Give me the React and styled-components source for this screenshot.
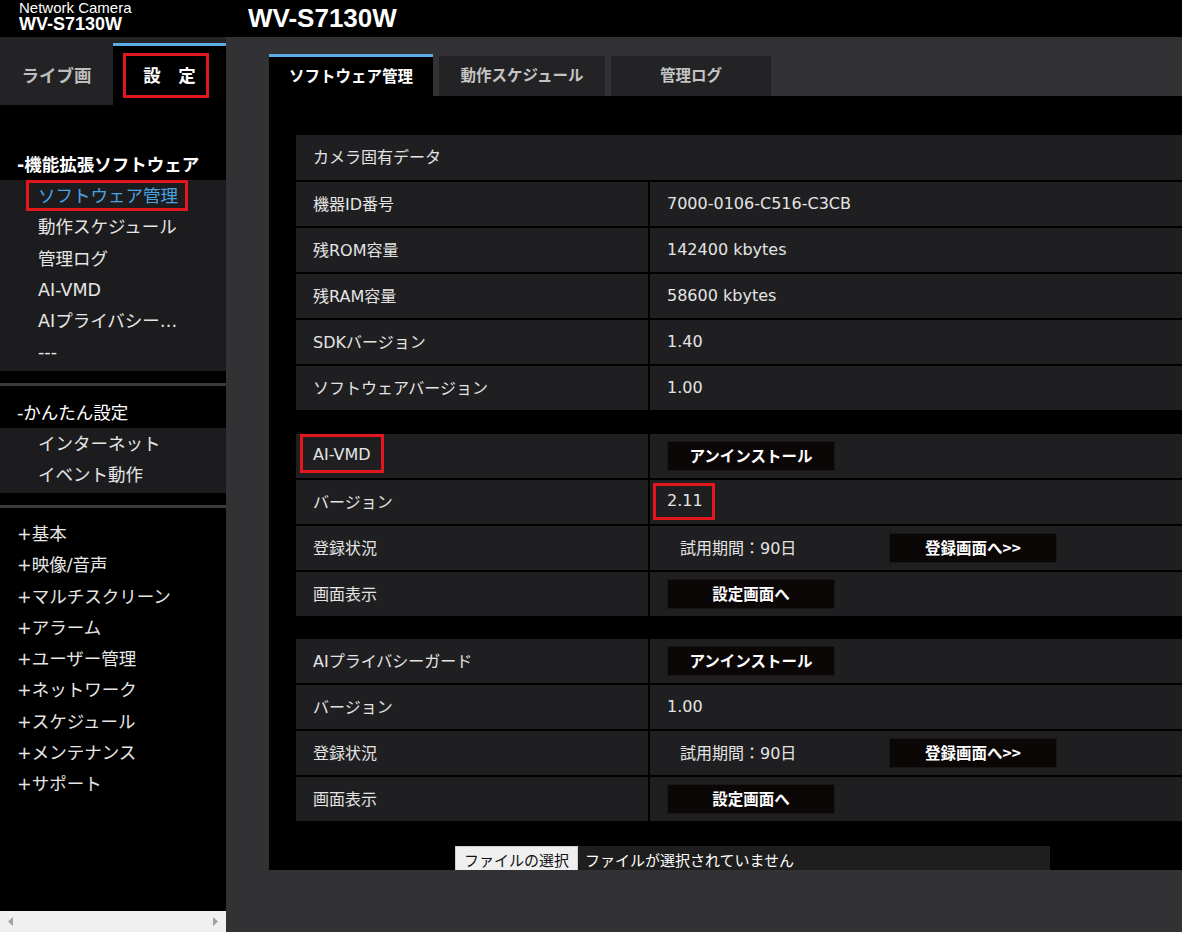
import React from 'react';
import styled, { createGlobalStyle } from 'styled-components';

const GlobalStyle = createGlobalStyle`
  html, body {
    margin: 0;
    padding: 0;
    background: #000;
    overflow: hidden;
  }
  body {
    font-family: "DejaVu Sans", "Noto Sans CJK JP", sans-serif;
    color: #e6e6e6;
  }
`;

const Page = styled.div`
  display: grid;
  grid-template-columns: 226px 1fr;
  grid-template-rows: 37px 895px;
  width: 1182px;
  height: 932px;
`;

const TopBar = styled.header`
  grid-column: 1 / -1;
  display: flex;
  background: #000;
  color: #fff;
  font-family: "Liberation Sans", Arial, sans-serif;
`;

const Brand = styled.div`
  width: 248px;
  padding: 1px 0 0 19px;
  box-sizing: border-box;
`;

const BrandSmall = styled.div`
  font-size: 15px;
  line-height: 14px;
`;

const BrandModel = styled.div`
  font-size: 18px;
  font-weight: bold;
  line-height: 19px;
`;

const Title = styled.h1`
  margin: 0;
  font-size: 26px;
  font-weight: bold;
  line-height: 37px;
`;

/* annotation frame drawn over a piece of text */
const Mark = styled.span`
  position: relative;
  display: inline-block;
  line-height: ${(p) => p.$lh || 'inherit'};

  &::after {
    content: '';
    position: absolute;
    inset: ${(p) => p.$inset};
    border: 3px solid #e3161d;
    pointer-events: none;
  }
`;

const Sidebar = styled.nav`
  display: flex;
  flex-direction: column;
  background: #000;
  overflow: hidden;
  font-size: 17.5px;
`;

const SideTabs = styled.div`
  display: flex;
  height: 68px;
  background: #232325;
`;

const SideTab = styled.div`
  width: 113px;
  box-sizing: border-box;
  display: flex;
  align-items: center;
  justify-content: center;
  font-weight: bold;
  color: ${(p) => (p.$active ? '#fff' : '#bdbdbd')};
  background: ${(p) => (p.$active ? '#000' : 'transparent')};
  margin-top: ${(p) => (p.$active ? '6px' : '0')};
  padding-top: ${(p) => (p.$active ? '0' : '6px')};
  border-top: ${(p) => (p.$active ? '3px solid #5aaee5' : 'none')};
`;

const MenuHeading = styled.div`
  padding: ${(p) => p.$pad} 0 0 17px;
  line-height: 30px;
  color: #fff;
  font-weight: ${(p) => (p.$bold ? 'bold' : 'normal')};
`;

const SubMenu = styled.div`
  background: #1c1c1e;
  padding-bottom: 3px;
`;

const MenuItem = styled.div`
  padding-left: ${(p) => p.$indent || '38px'};
  padding-top: 2px;
  line-height: 29.25px;
  height: 31.25px;
  box-sizing: border-box;
  color: ${(p) => (p.$current ? '#4aa2e0' : '#e6e6e6')};
  white-space: nowrap;
`;

const Separator = styled.div`
  margin-top: 12px;
  height: 3px;
  background: #3a3a3c;
`;

const PlusList = styled.div`
  padding-top: 10px;
`;

const ScrollBar = styled.div`
  margin-top: auto;
  height: 21px;
  background: #f0f0f0;
  display: flex;
  align-items: center;
  justify-content: space-between;
  padding: 0 8px;
`;

const Main = styled.main`
  background: #323234;
  padding: 17px 0 0 43px;
  overflow: hidden;
`;

const Tabs = styled.div`
  display: flex;
  align-items: flex-end;
  gap: 6px;
  height: 42px;
`;

const Tab = styled.div`
  width: ${(p) => p.$w}px;
  height: ${(p) => (p.$active ? '42px' : '40px')};
  box-sizing: border-box;
  display: flex;
  align-items: center;
  justify-content: center;
  padding-bottom: 4px;
  font-size: 15.5px;
  font-weight: bold;
  color: ${(p) => (p.$active ? '#fff' : '#c4c4c4')};
  background: ${(p) => (p.$active ? '#000' : '#232325')};
  border-top: ${(p) => (p.$active ? '3px solid #5aaee5' : 'none')};
`;

const Panel = styled.div`
  width: 1000px;
  height: 774px;
  box-sizing: border-box;
  padding: 39px 0 0 27px;
  background: #000;
  overflow: hidden;
`;

const Section = styled.div`
  display: grid;
  grid-template-columns: 352px 1fr;
  gap: 2px;
  width: 960px;
  margin-bottom: ${(p) => p.$gap || '24px'};
`;

const Cell = styled.div`
  display: flex;
  align-items: center;
  box-sizing: border-box;
  min-height: ${(p) => (p.$head ? '45px' : '44px')};
  padding: 0 0 ${(p) => (p.$head ? '4px' : '2px')} 17px;
  background: #1f1f21;
  font-size: 16px;
  color: #e4e4e4;
  grid-column: ${(p) => (p.$head ? '1 / -1' : 'auto')};
`;

const ButtonCell = styled(Cell)`
  padding-bottom: 0;
`;

const Button = styled.button`
  width: 168px;
  height: 30px;
  padding: 0 0 2px;
  background: #0c0707;
  border: 1px solid #1b1616;
  color: #fff;
  font-family: "Noto Sans CJK JP", sans-serif;
  font-size: 15.5px;
  font-weight: bold;
  cursor: pointer;
`;

const Trial = styled.span`
  width: 222px;
  box-sizing: border-box;
  padding: 0 0 2px 13px;
`;

const FileRow = styled.div`
  display: flex;
  margin-left: 159px;
  width: 595px;
  height: 40px;
  background: #1e1e1e;
  font-family: "Noto Sans CJK JP", sans-serif;
  font-size: 15px;
`;

const FileButton = styled.button`
  width: 123px;
  height: 28px;
  padding: 0;
  background: #efefef;
  border: 1px solid #cfcfcf;
  color: #111;
  font-family: inherit;
  font-size: 15px;
  line-height: 26px;
`;

const FileName = styled.span`
  margin-left: 7px;
  line-height: 28px;
  color: #fff;
`;

const Arrow = ({ dir }) => (
  <svg width="6" height="9" viewBox="0 0 6 9">
    <path d={dir === 'left' ? 'M5 0 L0 4.5 L5 9 Z' : 'M1 0 L6 4.5 L1 9 Z'} fill="#a3a3a3" />
  </svg>
);

const subItems = ['動作スケジュール', '管理ログ', 'AI-VMD', 'AIプライバシー…', '---'];
const plusItems = ['+基本', '+映像/音声', '+マルチスクリーン', '+アラーム', '+ユーザー管理', '+ネットワーク', '+スケジュール', '+メンテナンス', '+サポート'];

const cameraRows = [
  ['機器ID番号', '7000-0106-C516-C3CB'],
  ['残ROM容量', '142400 kbytes'],
  ['残RAM容量', '58600 kbytes'],
  ['SDKバージョン', '1.40'],
  ['ソフトウェアバージョン', '1.00'],
];

function ExtensionBlock({ name, version, highlight, gap }) {
  return (
    <Section $gap={gap}>
      <Cell>
        {highlight ? <Mark $lh="22px" $inset="-10px -13px -7px -13px">{name}</Mark> : name}
      </Cell>
      <ButtonCell><Button>アンインストール</Button></ButtonCell>
      <Cell>バージョン</Cell>
      <Cell>
        {highlight ? <Mark $lh="22px" $inset="-7px -12px -8px -14px">{version}</Mark> : version}
      </Cell>
      <Cell>登録状況</Cell>
      <ButtonCell>
        <Trial>試用期間：90日</Trial>
        <Button>登録画面へ&gt;&gt;</Button>
      </ButtonCell>
      <Cell>画面表示</Cell>
      <ButtonCell><Button>設定画面へ</Button></ButtonCell>
    </Section>
  );
}

export default function App() {
  return (
    <>
      <GlobalStyle />
      <Page>
        <TopBar>
          <Brand>
            <BrandSmall>Network Camera</BrandSmall>
            <BrandModel>WV-S7130W</BrandModel>
          </Brand>
          <Title>WV-S7130W</Title>
        </TopBar>

        <Sidebar>
          <SideTabs>
            <SideTab>ライブ画</SideTab>
            <SideTab $active>
              <Mark $lh="24px" $inset="-11px -13px -10px -20px">設　定</Mark>
            </SideTab>
          </SideTabs>

          <MenuHeading $pad="45px" $bold>-機能拡張ソフトウェア</MenuHeading>
          <SubMenu>
            <MenuItem $current>
              <Mark $lh="29.25px" $inset="-2px -10px 0 -12px">ソフトウェア管理</Mark>
            </MenuItem>
            {subItems.map((item) => (
              <MenuItem key={item}>{item}</MenuItem>
            ))}
          </SubMenu>
          <Separator />

          <MenuHeading $pad="12px">-かんたん設定</MenuHeading>
          <SubMenu>
            <MenuItem>インターネット</MenuItem>
            <MenuItem>イベント動作</MenuItem>
          </SubMenu>
          <Separator />

          <PlusList>
            {plusItems.map((item) => (
              <MenuItem key={item} $indent="17px">{item}</MenuItem>
            ))}
          </PlusList>

          <ScrollBar>
            <Arrow dir="left" />
            <Arrow dir="right" />
          </ScrollBar>
        </Sidebar>

        <Main>
          <Tabs>
            <Tab $active $w={164}>ソフトウェア管理</Tab>
            <Tab $w={166}>動作スケジュール</Tab>
            <Tab $w={160}>管理ログ</Tab>
          </Tabs>
          <Panel>
            <Section>
              <Cell $head>カメラ固有データ</Cell>
              {cameraRows.map(([label, value]) => (
                <React.Fragment key={label}>
                  <Cell>{label}</Cell>
                  <Cell>{value}</Cell>
                </React.Fragment>
              ))}
            </Section>

            <ExtensionBlock name="AI-VMD" version="2.11" highlight gap="23px" />
            <ExtensionBlock name="AIプライバシーガード" version="1.00" gap="25px" />

            <FileRow>
              <FileButton>ファイルの選択</FileButton>
              <FileName>ファイルが選択されていません</FileName>
            </FileRow>
          </Panel>
        </Main>
      </Page>
    </>
  );
}
